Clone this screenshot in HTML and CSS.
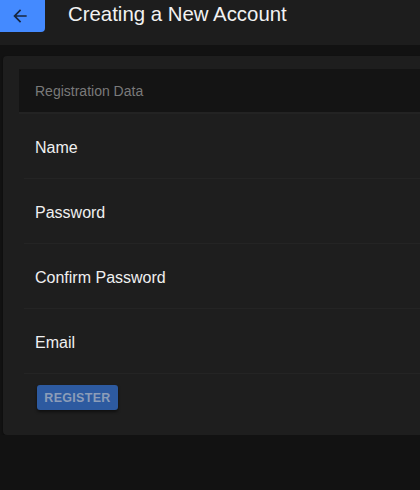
FILE: index.html
```html
<!DOCTYPE html>
<html>
<head>
<meta charset="utf-8">
<link rel="stylesheet" href="styles.css">
</head>
<body>
<header class="topbar">
  <button class="back" aria-label="Back">
    <svg width="20" height="20" viewBox="0 0 24 24"><path d="M20 11H7.83l5.59-5.59L12 4l-8 8 8 8 1.41-1.41L7.83 13H20v-2z" fill="#17263f"/></svg>
  </button>
  <h1 class="title">Creating a New Account</h1>
</header>
<main class="card">
  <div class="card-head">Registration Data</div>
  <div class="row">Name</div>
  <div class="row">Password</div>
  <div class="row">Confirm Password</div>
  <div class="row">Email</div>
  <div class="actions"><button class="register">REGISTER</button></div>
</main>
</body>
</html>
```
FILE: styles.css
```css
html, body {
  margin: 0;
  padding: 0;
  background: #121212;
  overflow: hidden;
  font-family: "Liberation Sans", Arial, sans-serif;
}
.topbar {
  height: 45px;
  background: #1d1d1d;
  display: flex;
  align-items: flex-start;
}
.back {
  width: 45px;
  height: 32px;
  border: none;
  padding: 0 6px 0 0;
  background: #448aff;
  border-radius: 0 0 4px 0;
  display: flex;
  align-items: center;
  justify-content: center;
}
.back svg { display: block; }
.title {
  margin: 0 0 0 23px;
  line-height: 28px;
  font-size: 20.4px;
  font-weight: normal;
  color: #f2f2f2;
}
.card {
  margin: 11px 0 0 3px;
  width: calc(100% - 3px);
  background: #1e1e1e;
  border-radius: 4px 0 0 4px;
  padding: 13px 0 0 16px;
  height: 379px;
  box-sizing: border-box;
  box-shadow: 0 1px 2px rgba(0,0,0,0.5);
}
.card-head {
  height: 43px;
  background: #141414;
  color: #7a7a7a;
  font-size: 14px;
  display: flex;
  align-items: center;
  padding-left: 16px;
  border-bottom: 2px solid #232323;
}
.row {
  margin-left: 5px;
  height: 65px;
  border-bottom: 1px solid #242424;
  display: flex;
  align-items: center;
  padding-left: 11px;
  padding-top: 4px;
  box-sizing: border-box;
  color: #f0f0f0;
  font-size: 16px;
}
.actions {
  padding: 11px 0 0 18px;
}
.register {
  width: 81px;
  height: 25px;
  border: none;
  border-radius: 3px;
  background: #2d5aa0;
  color: #8c9db8;
  font-family: "Liberation Sans", Arial, sans-serif;
  font-weight: bold;
  font-size: 12.5px;
  letter-spacing: 0.3px;
  padding: 0;
  box-shadow: 0 2px 3px rgba(0,0,0,0.5);
}
```
